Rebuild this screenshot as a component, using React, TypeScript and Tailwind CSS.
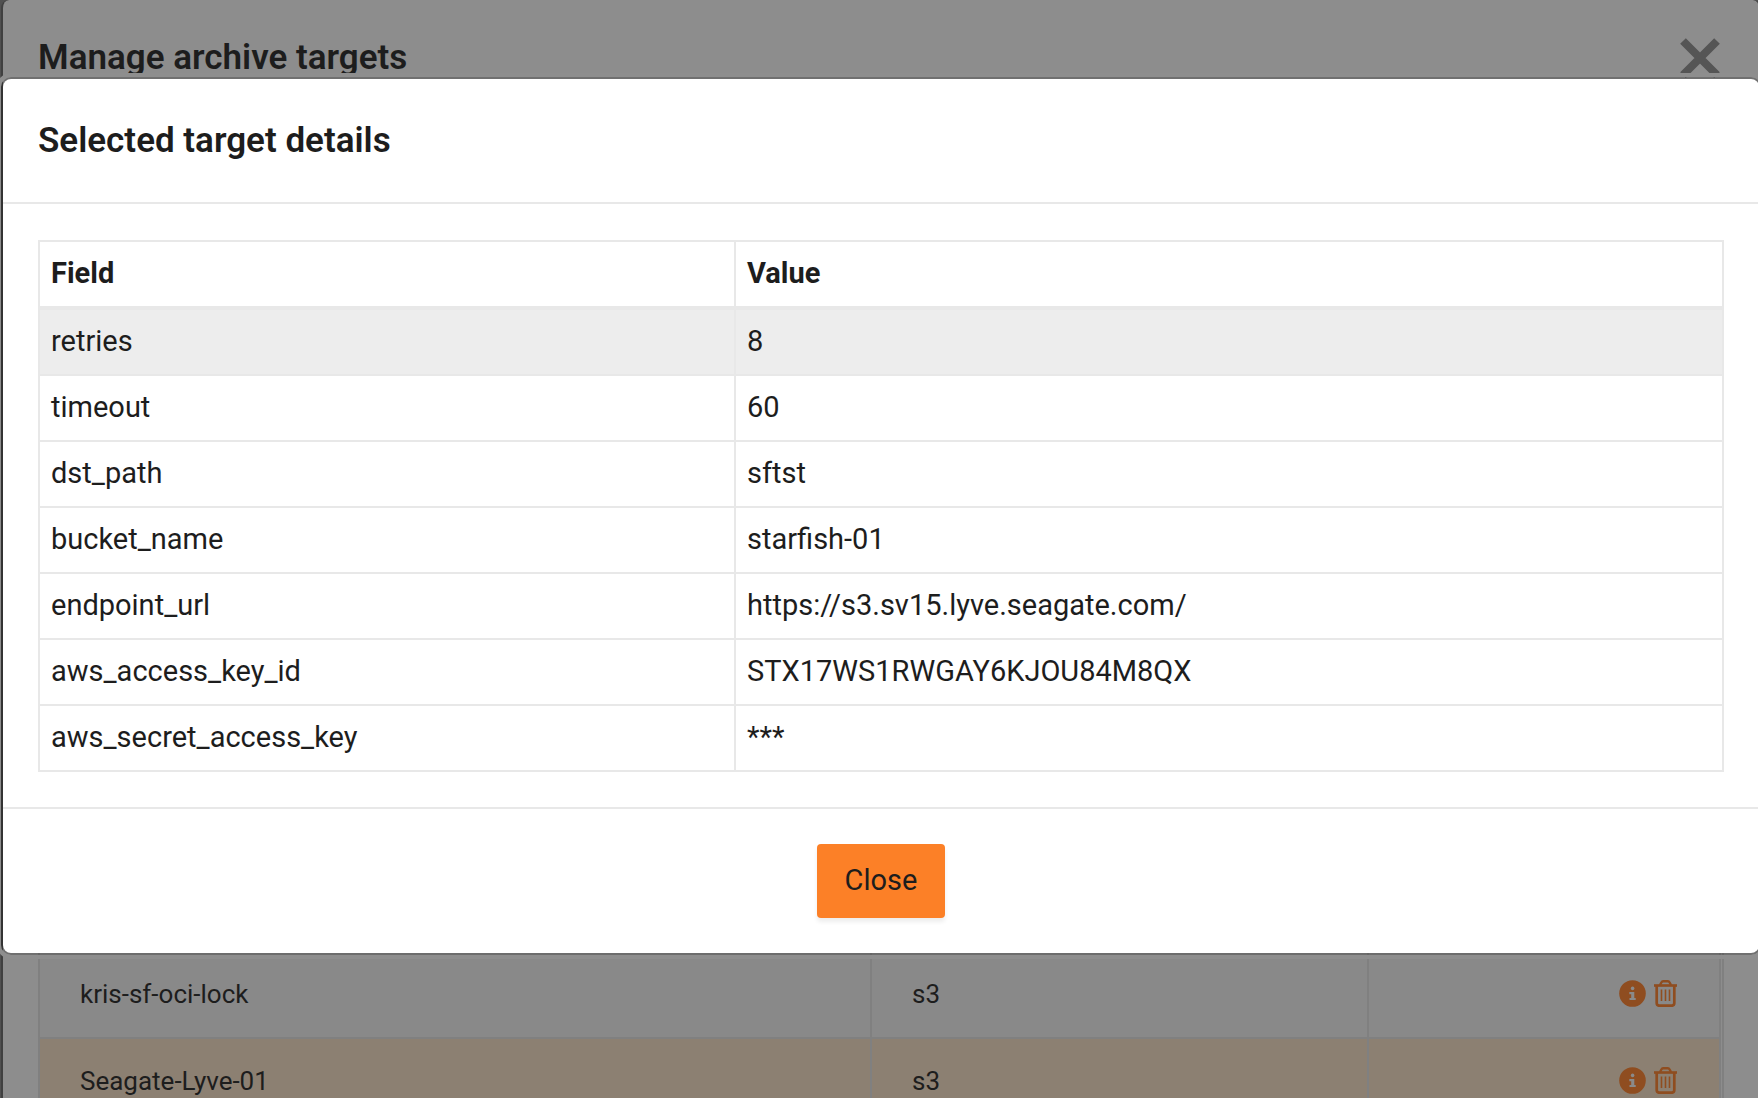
type Field = { name: string; value: string };

const fields: Field[] = [
  { name: "retries", value: "8" },
  { name: "timeout", value: "60" },
  { name: "dst_path", value: "sftst" },
  { name: "bucket_name", value: "starfish-01" },
  { name: "endpoint_url", value: "https://s3.sv15.lyve.seagate.com/" },
  { name: "aws_access_key_id", value: "STX17WS1RWGAY6KJOU84M8QX" },
  { name: "aws_secret_access_key", value: "***" },
];

const targets = [
  { name: "kris-sf-oci-lock", type: "s3", selected: false },
  { name: "Seagate-Lyve-01", type: "s3", selected: true },
];

function CrossIcon() {
  return (
    <svg viewBox="0 0 40 40" className="size-10" stroke="currentColor" strokeWidth="8" aria-hidden="true">
      <path d="M3 3l34 34M37 3L3 37" />
    </svg>
  );
}

function InfoIcon() {
  return (
    <svg viewBox="0 0 27 27" className="size-[27px]" aria-hidden="true">
      <circle cx="13.5" cy="13.5" r="13.3" fill="currentColor" />
      <g className="fill-[#8a8a8a]">
        <circle cx="13.6" cy="8.4" r="1.8" />
        <path d="M10.3 12h5v5.9h1.4v2.2h-6.2v-2.2h1.7v-3.7h-1.9z" />
      </g>
    </svg>
  );
}

function TrashIcon() {
  return (
    <svg
      viewBox="0 0 23 27"
      className="h-[27px] w-[23px]"
      fill="none"
      stroke="currentColor"
      aria-hidden="true"
    >
      <path d="M0 5.5h23" strokeWidth="2.6" />
      <path d="M6 5l1.5-2.7q.5-1.1 1.6-1.1h4.8q1.1 0 1.6 1.1l1.5 2.7" strokeWidth="2.4" />
      <path d="M2.7 6v17q0 2.7 2.7 2.7h12.2q2.7 0 2.7-2.7V6" strokeWidth="2.7" />
      <path d="M7.5 9.5v11.5M11.5 9.5v11.5M15.5 9.5v11.5" strokeWidth="1.6" />
    </svg>
  );
}

function TargetsPanel() {
  return (
    <main className="ml-px -mr-[3px] min-h-screen rounded-t-lg border-x-2 border-black/20 bg-[#8d8d8d] bg-clip-padding">
      <header className="flex items-center justify-between pt-[29px] pr-[39px] pl-[35px]">
        <h1 className="text-[35px] leading-[58px] font-semibold">Manage archive targets</h1>
        <button type="button" aria-label="Close targets" className="text-[#555555]">
          <CrossIcon />
        </button>
      </header>
      <div className="px-[35px] pt-[863px]">
        <div className="border-x-2 border-[#808080] pr-px">
          <table className="w-full table-fixed border-collapse bg-[#898989] text-[26px] leading-[41px]">
            <colgroup>
              <col className="w-[831px]" />
              <col className="w-[497px]" />
              <col />
            </colgroup>
            <tbody>
              {targets.map((t) => (
                <tr
                  key={t.name}
                  className={t.selected ? "border-t-2 border-[#808080] bg-[#8c8072]" : "border-t-2 border-[#808080]"}
                >
                  <td className="border-r-2 border-[#808080] px-10 py-[22px]">{t.name}</td>
                  <td className="border-r-2 border-[#808080] px-10">{t.type}</td>
                  <td className="border-r-2 border-[#808080] px-[42px] pb-0.5">
                    <div className="flex items-center justify-end gap-2 text-[#8f4d20]">
                      <button type="button" aria-label={`Details of ${t.name}`}>
                        <InfoIcon />
                      </button>
                      <button type="button" aria-label={`Delete ${t.name}`}>
                        <TrashIcon />
                      </button>
                    </div>
                  </td>
                </tr>
              ))}
            </tbody>
          </table>
        </div>
      </div>
    </main>
  );
}

function DetailsDialog() {
  return (
    <div className="absolute inset-0 overflow-hidden pt-[77px]">
      <section
        role="dialog"
        aria-labelledby="details-title"
        className="ml-px -mr-[3px] rounded-[10px] border-2 border-black/20 bg-white bg-clip-padding outline-4 outline-[#8e8e8e]"
      >
        <header className="border-b-2 border-[#e8e8e8] px-[35px] pt-[35px] pb-[34px]">
          <h2 id="details-title" className="text-[35px] leading-[54px] font-semibold">
            Selected target details
          </h2>
        </header>

        <div className="px-[35px] pt-9 pb-[35px]">
          <table className="w-full table-fixed border-collapse text-left text-[29px] leading-[42px]">
            <thead>
              <tr>
                <th className="w-[696px] border-2 border-b-4 border-[#e8e8e8] px-[11px] pt-2.5 pb-3 font-bold">Field</th>
                <th className="border-2 border-b-4 border-[#e8e8e8] px-[11px] pt-2.5 pb-3 font-bold">Value</th>
              </tr>
            </thead>
            <tbody>
              {fields.map((f) => (
                <tr key={f.name} className="first:bg-[#ededed]">
                  <td className="border-2 border-[#e8e8e8] px-[11px] pt-2.5 pb-3">{f.name}</td>
                  <td className="border-2 border-[#e8e8e8] px-[11px] pt-2.5 pb-3">{f.value}</td>
                </tr>
              ))}
            </tbody>
          </table>
        </div>

        <footer className="flex justify-center border-t-2 border-[#e8e8e8] py-[35px]">
          <button
            type="button"
            className="rounded bg-[#fc8027] px-7 pt-[15px] pb-[17px] text-[29px] leading-[42px] shadow-[0_4px_4px_rgba(0,0,0,0.07)]"
          >
            Close
          </button>
        </footer>
      </section>
    </div>
  );
}

export default function App() {
  return (
    <div className="relative h-screen overflow-hidden bg-[#505050] font-[Roboto,sans-serif] text-[#1d1d1d]">
      <TargetsPanel />
      <DetailsDialog />
    </div>
  );
}
